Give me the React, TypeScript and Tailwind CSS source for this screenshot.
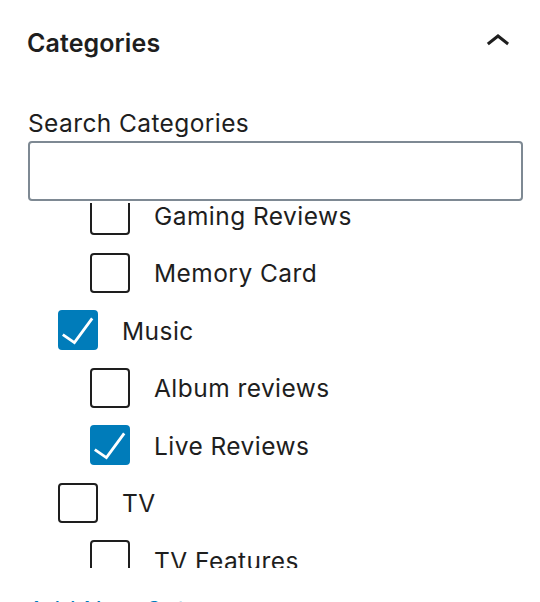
import React from 'react';

type Term = { name: string; level: number; checked?: boolean };

const TERMS: Term[] = [
  { name: 'Gaming Reviews', level: 1 },
  { name: 'Memory Card', level: 1 },
  { name: 'Music', level: 0, checked: true },
  { name: 'Album reviews', level: 1 },
  { name: 'Live Reviews', level: 1, checked: true },
  { name: 'TV', level: 0 },
  { name: 'TV Features', level: 1 },
];

const Checkbox = ({ checked }: { checked?: boolean }) => (
  <span
    className={
      checked
        ? 'relative flex h-[40px] w-[40px] shrink-0 rounded-[4px] border-2 border-[#007cba] bg-[#007cba]'
        : 'relative flex h-[40px] w-[40px] shrink-0 rounded-[4px] border-2 border-[#1e1e1e] bg-white'
    }
  >
    {checked && (
      <svg viewBox="0 0 40 40" className="absolute left-[-2px] top-[-2px] h-[40px] w-[40px]">
        <path d="M4.8 24.6L16.4 32.6 34.2 8.4" fill="none" stroke="#fff" strokeWidth="2.8" />
      </svg>
    )}
  </span>
);

export default function App() {
  return (
    <div className="h-[602px] w-[540px] overflow-hidden bg-white font-['Inter',sans-serif] text-[#1e1e1e]">
      <div className="flex h-[84px] items-center justify-between pl-[27px] pr-[18px]">
        <h2 className="mt-[3px] text-[25px] font-semibold leading-none tracking-[0.1px]">Categories</h2>
        <svg viewBox="0 0 24 24" className="h-[48px] w-[48px]" fill="#1e1e1e">
          <path d="M6.5 12.4L12 8l5.5 4.4-.9 1.2L12 10l-4.6 3.6-1-1.2z" />
        </svg>
      </div>

      <div className="pl-[28px] pr-[17px]">
        <label className="mt-[23px] block text-[24.5px] leading-[32px] tracking-[0.4px]">
          Search Categories
        </label>
        <input
          type="search"
          className="mt-[2px] block h-[60px] w-full rounded-[4px] border-2 border-[#7e8993] bg-white px-[16px] text-[24px] outline-none"
        />

        <div className="mt-[2px] h-[365px] overflow-hidden">
          <ul className="-mt-[8px] flex flex-col gap-[17.5px]">
            {TERMS.map((t) => (
              <li
                key={t.name}
                className={`flex h-[40px] items-center ${t.level === 1 ? 'pl-[62px]' : 'pl-[30px]'}`}
              >
                <Checkbox checked={t.checked} />
                <span className="ml-[24px] mt-[2px] text-[24.5px] leading-none tracking-[0.45px]">
                  {t.name}
                </span>
              </li>
            ))}
          </ul>
        </div>

        <button className="mt-[26px] block text-[24.5px] leading-[32px] tracking-[0.45px] text-[#007cba] underline">
          Add New Category
        </button>
      </div>
    </div>
  );
}
